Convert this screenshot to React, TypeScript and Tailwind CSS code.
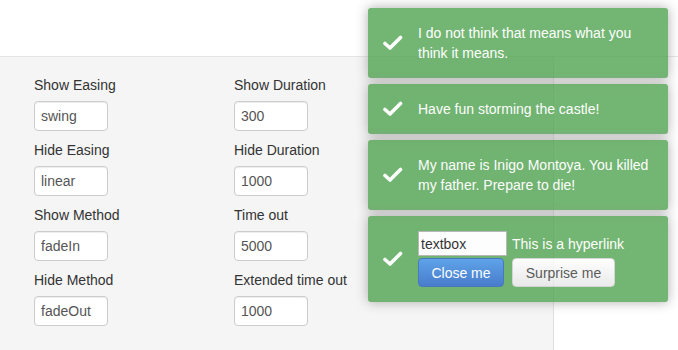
import React from 'react';

const fields: [string, string, string, string][] = [
  ['Show Easing', 'swing', 'Show Duration', '300'],
  ['Hide Easing', 'linear', 'Hide Duration', '1000'],
  ['Show Method', 'fadeIn', 'Time out', '5000'],
  ['Hide Method', 'fadeOut', 'Extended time out', '1000'],
];

function Field({ label, value }: { label: string; value: string }) {
  return (
    <div className="w-[200px]">
      <div className="h-[20px] text-[14px] leading-[20px] text-[#333]">{label}</div>
      <div className="mt-[6px] flex h-[30px] w-[74px] items-center rounded-[4px] border border-[#ccc] bg-white px-[6px] text-[14px] text-[#555] shadow-[inset_0_1px_1px_rgba(0,0,0,0.075)]">
        {value}
      </div>
    </div>
  );
}

function Check() {
  return (
    <svg width="20" height="16" viewBox="0 0 20 16" className="absolute left-[15px] top-1/2 -translate-y-1/2">
      <path d="M2 8.5 L7 13 L17.5 2.5" fill="none" stroke="white" strokeWidth="3.6" strokeLinecap="round" strokeLinejoin="round" />
    </svg>
  );
}

function Toast({ children }: { children: React.ReactNode }) {
  return (
    <div className="relative w-[300px] rounded-[3px] bg-[#51a351] py-[15px] pl-[50px] pr-[15px] text-[14px] leading-[20px] text-white opacity-80 shadow-[0_0_12px_#999]">
      <Check />
      {children}
    </div>
  );
}

export default function App() {
  return (
    <div className="relative h-[350px] w-[678px] overflow-hidden bg-white font-['Liberation_Sans',Arial,sans-serif]">
      <div className="h-[57px] border-b border-[#e5e5e5] bg-white" />
      <div className="flex h-[293px]">
        <div className="w-[554px] border-r border-[#e0e0e0] bg-[#f5f5f5] pl-[34px] pt-[18px]">
          <div className="flex flex-col gap-[9px]">
            {fields.map(([l1, v1, l2, v2]) => (
              <div key={l1} className="flex">
                <Field label={l1} value={v1} />
                <Field label={l2} value={v2} />
              </div>
            ))}
          </div>
        </div>
        <div className="flex-1 bg-white" />
      </div>

      <div className="absolute right-[10px] top-[8px] flex flex-col gap-[6px]">
        <Toast>I do not think that means what you think it means.</Toast>
        <Toast>Have fun storming the castle!</Toast>
        <Toast>My name is Inigo Montoya. You killed my father. Prepare to die!</Toast>
        <Toast>
          <div className="flex items-center gap-[5px]">
            <div className="flex h-[25px] w-[89px] items-center border border-[#aaa] bg-white pl-[2px] text-[14px] text-black">
              textbox
            </div>
            <span>This is a hyperlink</span>
          </div>
          <div className="mt-[2px] flex gap-[8px]">
            <div className="flex h-[29px] w-[86px] items-center justify-center rounded-[4px] border border-[#1f5bb0] bg-gradient-to-b from-[#3a8fe6] to-[#1f5fc2] text-[14px] text-white">
              Close me
            </div>
            <div className="flex h-[29px] w-[103px] items-center justify-center rounded-[4px] border border-[#ccc] bg-gradient-to-b from-white to-[#e6e6e6] text-[14px] text-[#333]">
              Surprise me
            </div>
          </div>
        </Toast>
      </div>
    </div>
  );
}
